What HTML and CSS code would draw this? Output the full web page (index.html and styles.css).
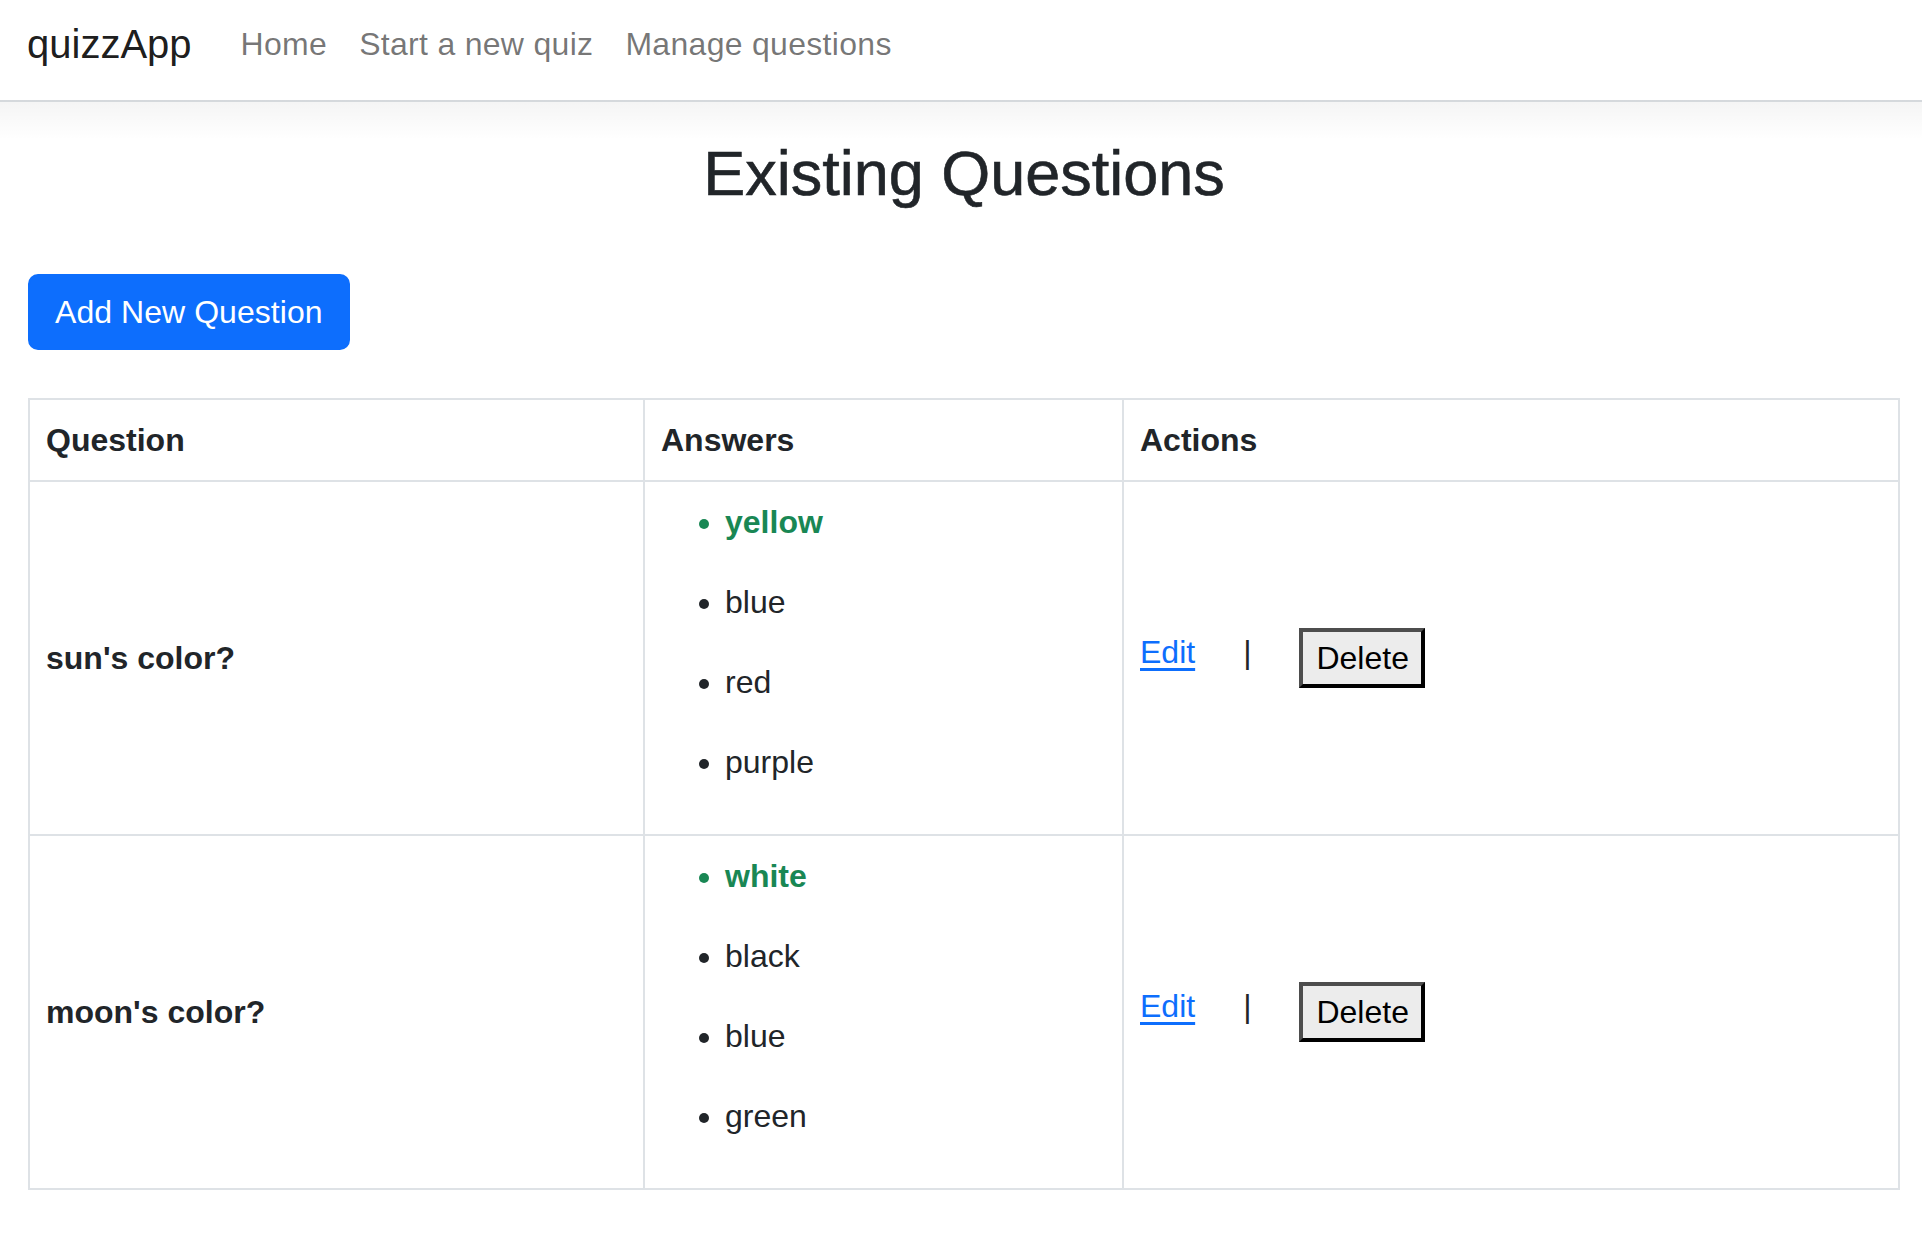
FILE: index.html
```html
<!DOCTYPE html>
<html lang="en">
<head>
<meta charset="utf-8">
<title>quizzApp</title>
<link rel="stylesheet" href="styles.css">
</head>
<body>
<nav class="navbar">
  <a class="brand" href="#">quizzApp</a>
  <ul class="nav-links">
    <li><a href="#">Home</a></li>
    <li><a href="#">Start a new quiz</a></li>
    <li><a href="#">Manage questions</a></li>
  </ul>
</nav>
<main class="content">
  <h1 class="title">Existing Questions</h1>
  <a class="btn-primary" href="#">Add New Question</a>
  <table class="qtable">
    <colgroup>
      <col class="col-q">
      <col class="col-a">
      <col class="col-act">
    </colgroup>
    <thead>
      <tr><th>Question</th><th>Answers</th><th>Actions</th></tr>
    </thead>
    <tbody>
      <tr>
        <td class="qcell">sun's color?</td>
        <td>
          <ul class="answers">
            <li class="correct">yellow</li>
            <li>blue</li>
            <li>red</li>
            <li>purple</li>
          </ul>
        </td>
        <td>
          <div class="actions">
            <a class="edit" href="#">Edit</a>
            <span class="sep">|</span>
            <form class="del-form"><button class="del-btn" type="button">Delete</button></form>
          </div>
        </td>
      </tr>
      <tr>
        <td class="qcell">moon's color?</td>
        <td>
          <ul class="answers">
            <li class="correct">white</li>
            <li>black</li>
            <li>blue</li>
            <li>green</li>
          </ul>
        </td>
        <td>
          <div class="actions">
            <a class="edit" href="#">Edit</a>
            <span class="sep">|</span>
            <form class="del-form"><button class="del-btn" type="button">Delete</button></form>
          </div>
        </td>
      </tr>
    </tbody>
  </table>
</main>
</body>
</html>
```

FILE: styles.css
```css
* { box-sizing: border-box; }

html, body {
  margin: 0;
  padding: 0;
  background: #fff;
}

body {
  font-family: "Liberation Sans", Arial, Helvetica, sans-serif;
  font-size: 32px;
  line-height: 48px;
  color: #212529;
}

.navbar {
  position: relative;
  height: 102px;
  padding: 0 0 12px 27px;
  display: flex;
  align-items: center;
  border-bottom: 2px solid #dee2e6;
  background: #fff;
}

.navbar::after {
  content: "";
  position: absolute;
  left: 0;
  right: 0;
  top: 100%;
  height: 40px;
  background: linear-gradient(to bottom, rgba(0, 0, 0, 0.045), rgba(0, 0, 0, 0));
  pointer-events: none;
}

.brand {
  font-size: 40px;
  line-height: 60px;
  color: rgba(0, 0, 0, 0.9);
  text-decoration: none;
  margin-right: 33px;
}

.nav-links {
  list-style: none;
  margin: 0;
  padding: 0;
  display: flex;
}

.nav-links a {
  display: block;
  padding: 0 16px;
  font-size: 32px;
  line-height: 48px;
  letter-spacing: 0.3px;
  color: rgba(0, 0, 0, 0.55);
  text-decoration: none;
}

.content {
  padding: 0 22px 0 28px;
}

.title {
  margin: 34px 0 64px;
  text-align: center;
  font-size: 63px;
  line-height: 74px;
  font-weight: 400;
  -webkit-text-stroke: 0.6px #212529;
  color: #212529;
}

.btn-primary {
  display: inline-block;
  padding: 12px 25px;
  line-height: 48px;
  font-size: 32px;
  letter-spacing: 0.05px;
  color: #fff;
  background: #0d6efd;
  border: 2px solid #0d6efd;
  border-radius: 10px;
  text-decoration: none;
}

.qtable {
  margin-top: 48px;
  width: 1872px;
  border-collapse: collapse;
  table-layout: fixed;
}

.col-q { width: 615px; }
.col-a { width: 479px; }

.qtable th,
.qtable td {
  border: 2px solid #dee2e6;
  padding: 16px;
  text-align: left;
  vertical-align: middle;
}

.qtable th {
  font-weight: 700;
  vertical-align: bottom;
}

.qcell {
  font-weight: 700;
}

.answers {
  margin: 0;
  padding-left: 64px;
}

.answers li {
  margin-bottom: 32px;
  line-height: 48px;
}

.answers li.correct {
  color: #198754;
  font-weight: 700;
}

.actions {
  display: flex;
  align-items: flex-start;
}

.edit {
  color: #0d6efd;
  text-decoration: underline;
  text-underline-offset: 5px;
}

.sep {
  margin: 0 48px 0 48px;
}

.del-form {
  margin: 0;
}

.del-btn {
  font-family: "Liberation Sans", Arial, Helvetica, sans-serif;
  font-size: 32px;
  line-height: 48px;
  color: #000;
  background: #ececec;
  padding: 2px 12px 2px 13px;
  border-width: 4px;
  border-style: solid;
  border-color: #4d4d4d #000 #000 #4d4d4d;
  border-radius: 0;
}
```
